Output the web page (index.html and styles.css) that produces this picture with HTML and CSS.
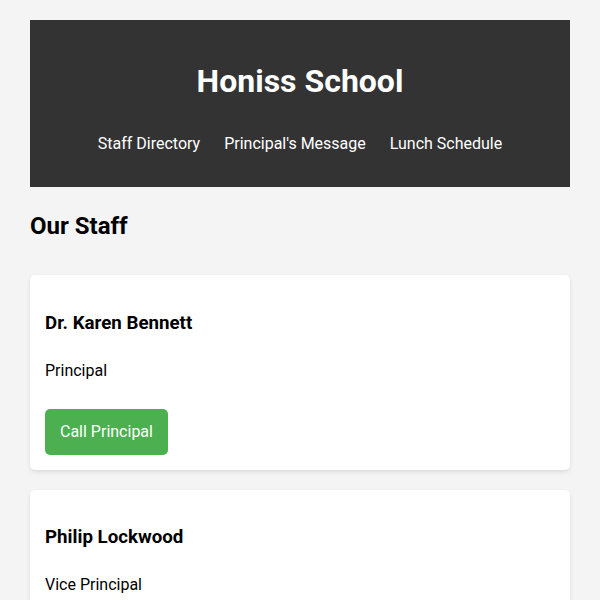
FILE: index.html
```html
<!DOCTYPE html>
<html lang="en">
<head>
<meta charset="utf-8">
<title>Honiss School</title>
<link rel="stylesheet" href="styles.css">
</head>
<body>
<div class="container">
  <header class="site-header">
    <h1 class="site-title">Honiss School</h1>
    <nav class="site-nav">
      <a href="#" class="nav-link">Staff Directory</a>
      <a href="#" class="nav-link">Principal's Message</a>
      <a href="#" class="nav-link">Lunch Schedule</a>
    </nav>
  </header>
  <main>
    <h2 class="section-title">Our Staff</h2>
    <div class="card">
      <h3 class="card-name">Dr. Karen Bennett</h3>
      <p class="card-role">Principal</p>
      <a href="#" class="btn">Call Principal</a>
    </div>
    <div class="card">
      <h3 class="card-name">Philip Lockwood</h3>
      <p class="card-role">Vice Principal</p>
      <a href="#" class="btn">Call Vice Principal</a>
    </div>
  </main>
</div>
</body>
</html>
```

FILE: styles.css
```css
html, body {
  margin: 0;
  padding: 0;
}
body {
  background: #f4f4f4;
  font-family: Roboto, "Liberation Sans", Arial, sans-serif;
  line-height: 1.6;
  color: #000;
}
.container {
  width: 90%;
  margin: 20px auto;
}
.site-header {
  background: #333;
  color: #fff;
  padding: 20px;
  text-align: center;
}
.site-title {
  font-size: 32px;
  font-weight: 700;
  margin: 16px 0 14px;
}
.site-nav {
  display: flex;
  justify-content: center;
  gap: 4px;
}
.nav-link {
  display: inline-block;
  color: #fff;
  text-decoration: none;
  font-size: 16px;
  padding: 10px;
}
.section-title {
  font-size: 24px;
  font-weight: 700;
  margin: 20px 0 30px;
}
.card {
  background: #fff;
  border-radius: 5px;
  box-shadow: 0 2px 4px rgba(0, 0, 0, 0.1);
  padding: 15px;
  margin-bottom: 20px;
}
.card-name {
  font-size: 18.72px;
  font-weight: 700;
  margin: 18.72px 0;
}
.card-role {
  font-size: 16px;
  margin: 0 0 16px;
}
.btn {
  display: inline-block;
  margin-top: 10px;
  background: #4caf50;
  color: #fff;
  text-decoration: none;
  font-size: 16px;
  padding: 10px 15px;
  border-radius: 5px;
}
```
